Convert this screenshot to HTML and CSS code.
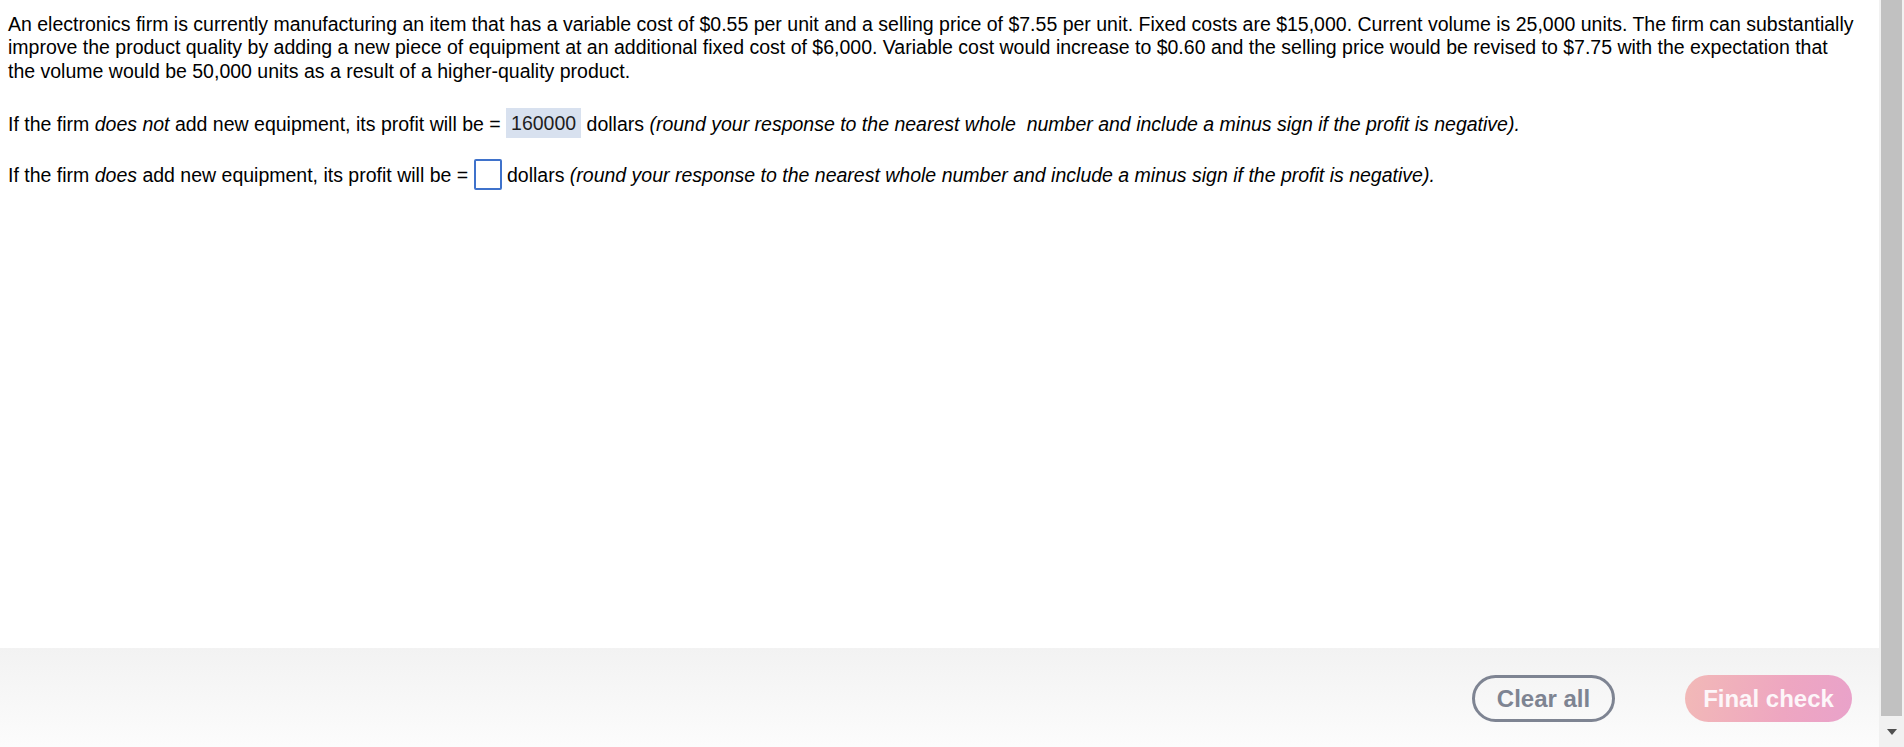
FILE: index.html
```html
<!DOCTYPE html>
<html>
<head>
<meta charset="utf-8">
<link rel="stylesheet" href="styles.css">
</head>
<body>
<div class="app">
  <div class="page">
    <div class="content">
      <p class="para first">An electronics firm is currently manufacturing an item that has a variable cost of $0.55 per unit and a selling price of $7.55 per unit. Fixed costs are $15,000. Current volume is 25,000 units. The firm can substantially improve the product quality by adding a new piece of equipment at an additional fixed cost of $6,000. Variable cost would increase to $0.60 and the selling price would be revised to $7.75 with the expectation that the volume would be 50,000 units as a result of a higher-quality product.</p>
      <p class="para q1">If the firm <i>does not</i> add new equipment, its profit will be = <span class="answer">160000</span> dollars <i>(round your response to the nearest whole&nbsp; number and include a minus sign if the profit is negative).</i></p>
      <p class="para q2">If the firm <i>does</i> add new equipment, its profit will be = <span class="input"></span> dollars <i>(round your response to the nearest whole number and include a minus sign if the profit is negative).</i></p>
    </div>
    <div class="footer">
      <button class="btn btn-clear">Clear all</button>
      <button class="btn btn-final">Final check</button>
    </div>
  </div>
  <div class="scrollbar">
    <div class="thumb"></div>
    <div class="arrow-area"><span class="arrow-down"></span></div>
  </div>
</div>
</body>
</html>
```
FILE: styles.css
```css
html, body {
  margin: 0;
  padding: 0;
  height: 100%;
  overflow: hidden;
  background: #fff;
}
body {
  font-family: "Liberation Sans", Arial, sans-serif;
  color: #000;
}
.app {
  display: flex;
  height: 747px;
}
.page {
  flex: 1;
  display: flex;
  flex-direction: column;
  min-width: 0;
}
.content {
  flex: 1;
  padding: 0 22px 0 8px;
}
.para {
  margin: 0;
  font-size: 19.5px;
  line-height: 23.4px;
}
.para.first {
  margin-top: 13px;
}
.para.q1 {
  margin-top: 24.6px;
}
.para.q2 {
  margin-top: 21px;
}
.answer {
  display: inline-block;
  background: #d8e1ef;
  color: #1e1e1e;
  padding: 4.6px 5px 1.7px 5px;
  line-height: 23.4px;
}
.input {
  display: inline-block;
  width: 24px;
  height: 27px;
  border: 2px solid #3f72cb;
  border-radius: 2px;
  background: #fff;
  vertical-align: -7.7px;
}
.footer {
  height: 99px;
  box-sizing: border-box;
  background: linear-gradient(to bottom, #f2f2f2, #fcfcfc);
  display: flex;
  justify-content: flex-end;
  align-items: flex-start;
  padding: 27px 27px 0 0;
  gap: 70px;
}
.btn {
  font-family: "Liberation Sans", Arial, sans-serif;
  font-weight: bold;
  font-size: 24px;
  height: 47px;
  border-radius: 24px;
  box-sizing: border-box;
  padding: 0;
  cursor: pointer;
}
.btn-clear {
  width: 143px;
  border: 3px solid #7e8492;
  background: transparent;
  color: #7e8492;
}
.btn-final {
  width: 167px;
  border: none;
  background: linear-gradient(100deg, #f2b9b7 0%, #eea6c1 60%, #e9a2ca 100%);
  color: #fdf6f9;
}
.scrollbar {
  width: 25px;
  background: #f1f1f1;
  display: flex;
  flex-direction: column;
}
.thumb {
  height: 716px;
  margin: 0 2px;
  background: #c1c1c1;
}
.arrow-area {
  flex: 1;
  display: flex;
  align-items: center;
  justify-content: center;
}
.arrow-down {
  width: 0;
  height: 0;
  border-left: 5.5px solid transparent;
  border-right: 5.5px solid transparent;
  border-top: 6px solid #505050;
}
```
